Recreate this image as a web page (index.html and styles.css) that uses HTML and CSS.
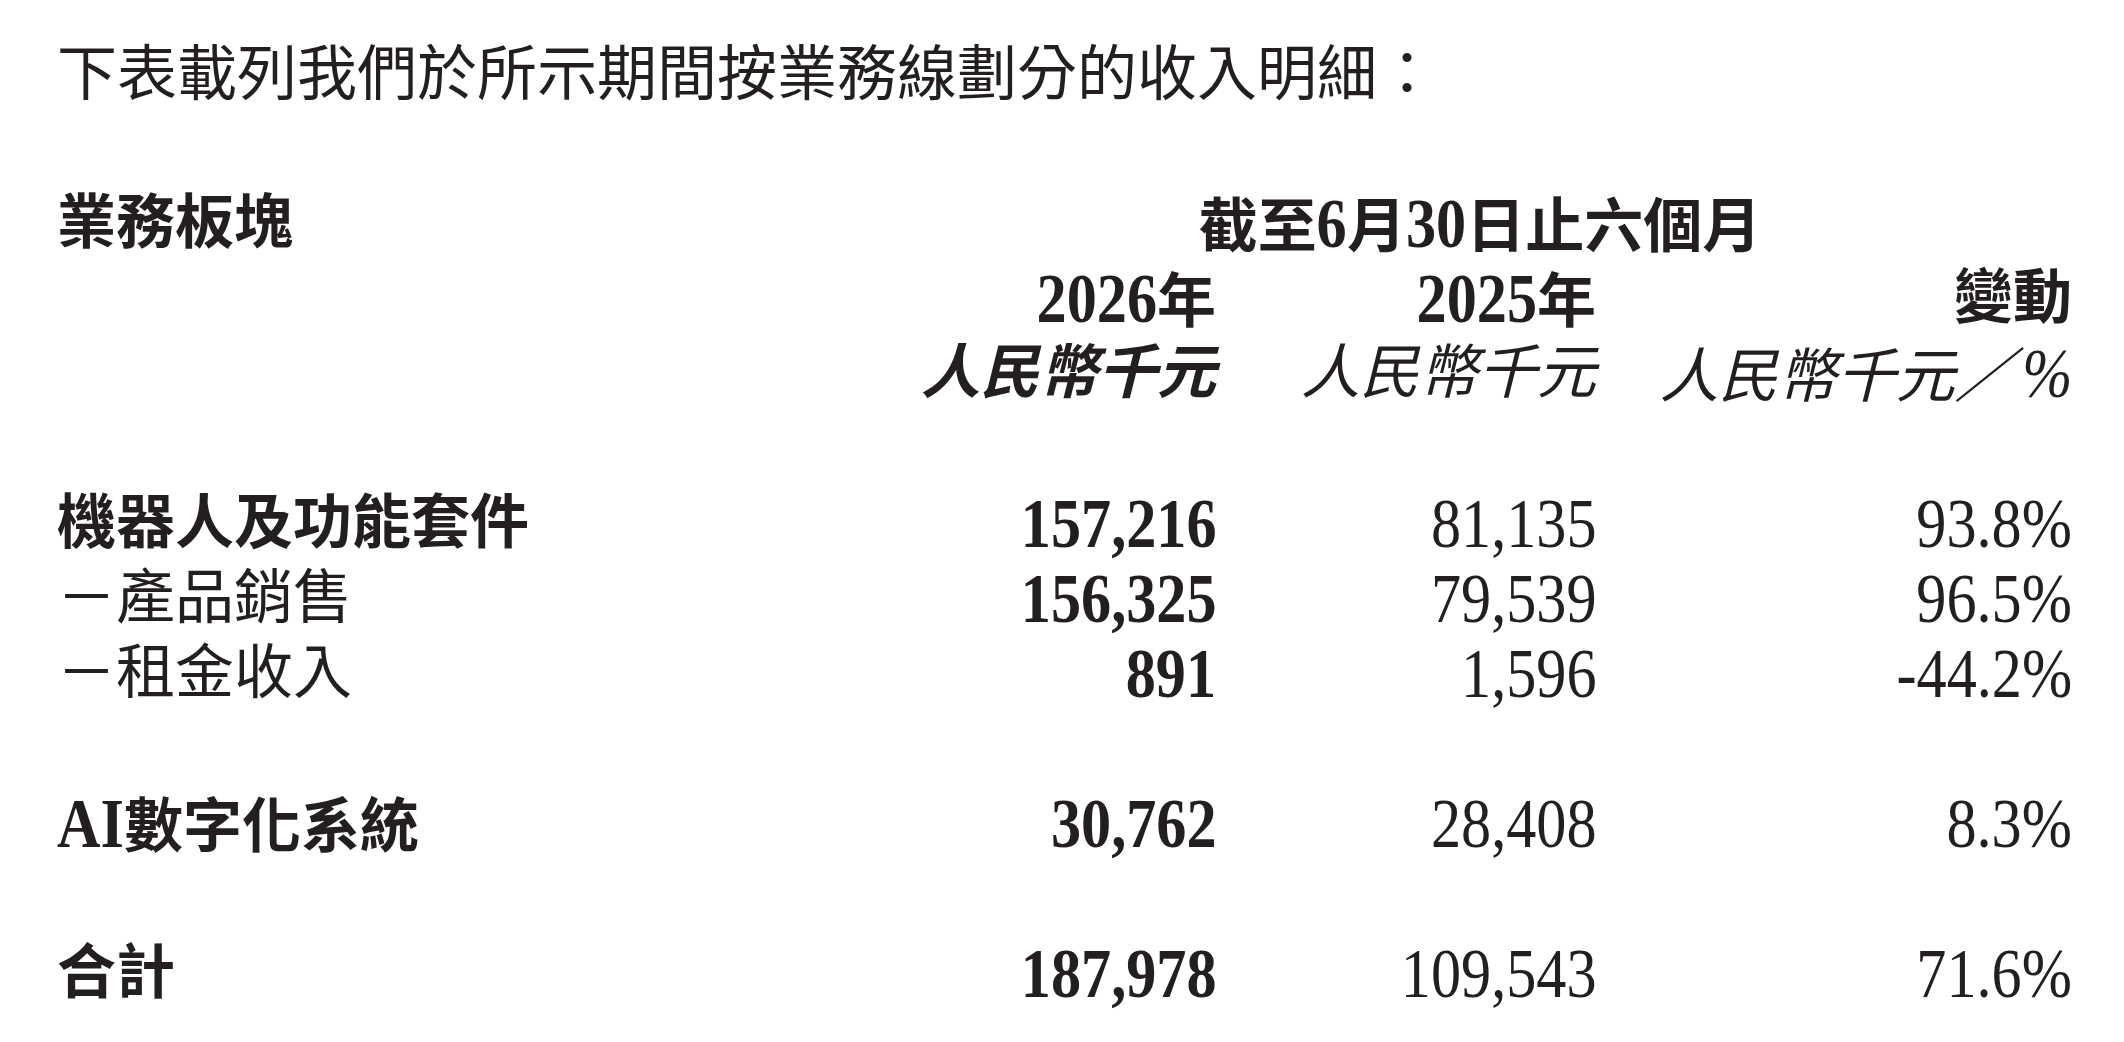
FILE: index.html
```html
<!DOCTYPE html>
<html lang="zh-Hant">
<head>
<meta charset="utf-8">
<title>收入明細</title>
<link rel="stylesheet" href="styles.css">
</head>
<body>
<p class="intro">下表載列我們於所示期間按業務線劃分的收入明細：</p>
<div class="table">
  <div class="cell label bold">業務板塊</div>
  <div class="cell period bold">截至<span class="n d1">6</span>月<span class="n d2">30</span>日止六個月</div>

  <div class="cell"></div>
  <div class="cell num bold"><span class="n">2026</span>年</div>
  <div class="cell num bold"><span class="n">2025</span>年</div>
  <div class="cell num bold">變動</div>

  <div class="cell"></div>
  <div class="cell num unit bold">人民幣千元</div>
  <div class="cell num unit">人民幣千元</div>
  <div class="cell num unit">人民幣千元／<span class="n">%</span></div>

  <div class="spacer"></div>

  <div class="cell label bold">機器人及功能套件</div>
  <div class="cell num bold"><span class="n">157,216</span></div>
  <div class="cell num"><span class="n">81,135</span></div>
  <div class="cell num"><span class="n">93.8%</span></div>

  <div class="cell label sub">－產品銷售</div>
  <div class="cell num bold"><span class="n">156,325</span></div>
  <div class="cell num"><span class="n">79,539</span></div>
  <div class="cell num"><span class="n">96.5%</span></div>

  <div class="cell label sub">－租金收入</div>
  <div class="cell num bold"><span class="n">891</span></div>
  <div class="cell num"><span class="n">1,596</span></div>
  <div class="cell num"><span class="n">-44.2%</span></div>

  <div class="spacer"></div>

  <div class="cell label bold"><span class="n lead">AI</span>數字化系統</div>
  <div class="cell num bold"><span class="n">30,762</span></div>
  <div class="cell num"><span class="n">28,408</span></div>
  <div class="cell num"><span class="n">8.3%</span></div>

  <div class="spacer"></div>

  <div class="cell label bold">合計</div>
  <div class="cell num bold"><span class="n">187,978</span></div>
  <div class="cell num"><span class="n">109,543</span></div>
  <div class="cell num"><span class="n">71.6%</span></div>
</div>
</body>
</html>
```
FILE: styles.css
```css
html, body {
  margin: 0;
  padding: 0;
  background: #ffffff;
}

body {
  padding: 31px 52px 0 57px;
  color: #231f20;
  font-family: "Liberation Serif", "Noto Sans CJK TC", serif;
  font-size: 59px;
}

.intro {
  margin: 0 0 80px 0;
  font-family: "Noto Sans CJK TC", sans-serif;
  font-size: 60px;
  line-height: 75px;
  font-weight: 400;
  white-space: nowrap;
}

.table {
  display: grid;
  grid-template-columns: 1fr 380px 380px 476px;
  grid-auto-rows: 75px;
}

.cell {
  line-height: 75px;
  white-space: nowrap;
  font-weight: 400;
}

.spacer {
  grid-column: 1 / -1;
}

.bold {
  font-weight: 700;
}

.label {
  grid-column: 1;
  text-align: left;
}

.period {
  grid-column: 2 / 5;
  text-align: center;
  padding-left: 52px;
}

.num {
  text-align: right;
}

.unit {
  font-style: italic;
}

.n {
  display: inline-block;
  font-size: 70px;
  transform: scaleX(0.86);
  transform-origin: right center;
}

.n.lead {
  transform-origin: left center;
  margin-right: -0.155em;
}

.n.d1 {
  transform-origin: center center;
  margin: 0 -0.035em;
}

.n.d2 {
  transform-origin: center center;
  margin: 0 -0.07em;
}
```
